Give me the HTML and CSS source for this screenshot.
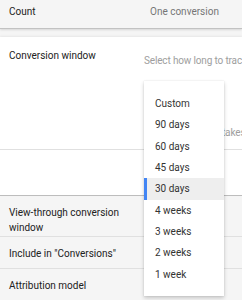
FILE: index.html
```html
<!DOCTYPE html>
<html lang="en">
<head>
  <meta charset="UTF-8" />
  <meta name="viewport" content="width=device-width, initial-scale=1.0" />
  <title>Conversion settings</title>
  <link rel="stylesheet" href="styles.css">
</head>
<body>
  <div class="summary">
    <div class="label">Count</div>
    <div class="value">One conversion</div>
  </div>

  <div class="gap"></div>

  <div class="panel">
    <div class="panel-top">
      <div class="label">Conversion window</div>
      <div class="desc">
        <div class="desc-line">Select how long to track</div>
        <div class="desc-line second">takes</div>
      </div>
    </div>
    <div class="divider"></div>

    <ul class="menu">
      <li>Custom</li>
      <li>90 days</li>
      <li>60 days</li>
      <li>45 days</li>
      <li class="selected">30 days</li>
      <li>4 weeks</li>
      <li>3 weeks</li>
      <li>2 weeks</li>
      <li>1 week</li>
    </ul>
  </div>

  <div class="row tall">
    <div class="label">View-through conversion window</div>
  </div>
  <div class="row">
    <div class="label">Include in "Conversions"</div>
  </div>
  <div class="row">
    <div class="label">Attribution model</div>
  </div>
</body>
</html>
```

FILE: styles.css
```css
body {
  margin: 0;
  width: 242px;
  overflow: hidden;
  font-family: Roboto, "Liberation Sans", sans-serif;
  font-size: 10px;
  line-height: 15px;
  color: #212121;
  background-color: #f5f5f5;
}
.label {
  width: 126px;
  flex-shrink: 0;
}
.summary {
  display: flex;
  height: 24px;
  padding: 4px 0 0 9px;
  border-bottom: 1px solid #c2c2c2;
  box-shadow: 0 1px 2px rgba(0,0,0,0.12);
}
.summary .label {
  width: 141px;
}
.summary .value {
  color: #757575;
  white-space: nowrap;
}
.gap {
  height: 8px;
}
.panel {
  position: relative;
  height: 158px;
  background: #fff;
  border-bottom: 1px solid #bdbdbd;
  box-shadow: 0 -1px 2px rgba(0,0,0,0.06);
}
.panel-top {
  display: flex;
  height: 112px;
  padding: 11px 0 0 9px;
  box-sizing: border-box;
}
.panel-top .label {
  width: 135px;
}
.desc {
  padding-top: 5px;
  color: #9e9e9e;
  white-space: nowrap;
  letter-spacing: -0.15px;
}
.desc-line.second {
  margin-top: 57px;
  padding-left: 78px;
}
.divider {
  height: 1px;
  background: #e0e0e0;
}
.menu {
  position: absolute;
  top: 44px;
  left: 144px;
  width: 80px;
  margin: 0;
  padding: 12px 0 11px;
  list-style: none;
  background: #fff;
  box-shadow: 0 2px 4px rgba(0,0,0,0.2), 0 0 1px rgba(0,0,0,0.15);
  z-index: 2;
}
.menu li {
  height: 21.33px;
  line-height: 21px;
  padding-left: 11px;
  color: #333;
}
.menu li.selected {
  background: #eeeeee;
  box-shadow: inset 3px 0 0 #4285f4;
}
.row {
  height: 22px;
  padding: 9px 9px 0;
  border-bottom: 1px solid #e0e0e0;
}
.row.tall {
  height: 31px;
}
```
